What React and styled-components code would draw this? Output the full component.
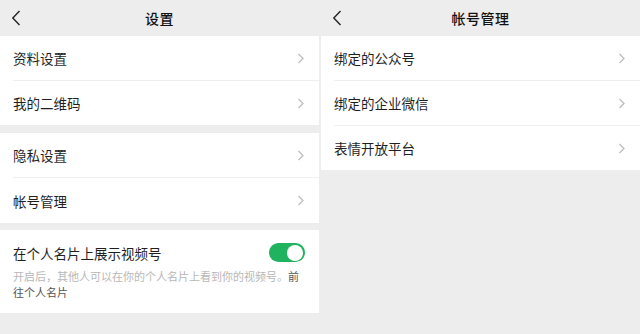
import React from "react";
import styled, { createGlobalStyle } from "styled-components";

const GlobalStyle = createGlobalStyle`
  html, body {
    margin: 0;
    padding: 0;
    background: #ededed;
  }
  body {
    font-family: "Noto Sans CJK SC", "Noto Sans", sans-serif;
    color: #1a1a1a;
  }
`;

const Screens = styled.div`
  display: grid;
  grid-template-columns: 320px 320px;
  width: 640px;
  height: 334px;
  overflow: hidden;
  background: #ededed;
`;

const Screen = styled.div`
  display: flex;
  flex-direction: column;
  padding-left: ${(p) => (p.$side === "right" ? "1px" : "0")};
  padding-right: ${(p) => (p.$side === "left" ? "1px" : "0")};
`;

const NavBar = styled.div`
  position: relative;
  height: 36px;
  display: flex;
  align-items: center;
  justify-content: center;
  background: #ededed;
`;

const BackButton = styled.div`
  position: absolute;
  left: 11px;
  top: 10px;
  width: 10px;
  height: 16px;
  display: flex;
`;

const NavTitle = styled.div`
  font-size: 14px;
  font-weight: 500;
  color: #111;
  letter-spacing: 0.5px;
`;

const Card = styled.div`
  background: #fff;
  margin-bottom: ${(p) => p.$gap || 0}px;
`;

const Row = styled.div`
  position: relative;
  height: ${(p) => p.$h || 44}px;
  display: flex;
  align-items: center;
  justify-content: space-between;
  padding: 0 14px 0 13px;
  font-size: 13.5px;
  color: #1f1f1f;

  & + & {
    border-top: 1px solid #f0f0f0;
  }
`;

const Divider = styled.div`
  height: 1px;
  margin-left: 13px;
  background: #efefef;
`;

const ToggleCard = styled.div`
  background: #fff;
  padding: 13px 13px 13px 13px;
`;

const ToggleRow = styled.div`
  height: 19px;
  display: flex;
  align-items: center;
  justify-content: space-between;
  font-size: 13.5px;
  color: #1f1f1f;
`;

const Switch = styled.div`
  width: 36px;
  height: 19px;
  border-radius: 10px;
  background: #1fb25f;
  display: flex;
  align-items: center;
  justify-content: flex-end;
  padding: 0 2px;
  box-sizing: border-box;
  margin-right: 1px;
`;

const Knob = styled.div`
  width: 16px;
  height: 16px;
  border-radius: 50%;
  background: #fff;
`;

const Desc = styled.div`
  margin-top: 6px;
  font-size: 11px;
  line-height: 16px;
  color: #b7b7b7;
`;

const DescLink = styled.span`
  color: #555;
`;

const Chevron = () => (
  <svg width="8" height="11" viewBox="0 0 8 11">
    <path d="M1.5 1 L6 5.5 L1.5 10" fill="none" stroke="#bdbdbd" strokeWidth="1.3" />
  </svg>
);

const Back = () => (
  <BackButton>
    <svg width="10" height="16" viewBox="0 0 10 16">
      <path d="M8.5 1 L1.8 8 L8.5 15" fill="none" stroke="#222" strokeWidth="1.4" />
    </svg>
  </BackButton>
);

const Item = ({ label, h }) => (
  <Row $h={h}>
    <span>{label}</span>
    <Chevron />
  </Row>
);

export default function App() {
  return (
    <Screens>
      <GlobalStyle />
      <Screen $side="left">
        <NavBar>
          <Back />
          <NavTitle>设置</NavTitle>
        </NavBar>
        <Card $gap={8}>
          <Item label="资料设置" h={44} />
          <Divider />
          <Item label="我的二维码" h={44} />
        </Card>
        <Card $gap={7}>
          <Item label="隐私设置" h={44} />
          <Divider />
          <Item label="帐号管理" h={45} />
        </Card>
        <ToggleCard>
          <ToggleRow>
            <span>在个人名片上展示视频号</span>
            <Switch>
              <Knob />
            </Switch>
          </ToggleRow>
          <Desc>
            开启后，其他人可以在你的个人名片上看到你的视频号。
            <DescLink>前往个人名片</DescLink>
          </Desc>
        </ToggleCard>
      </Screen>
      <Screen $side="right">
        <NavBar>
          <Back />
          <NavTitle>帐号管理</NavTitle>
        </NavBar>
        <Card>
          <Item label="绑定的公众号" h={44} />
          <Divider />
          <Item label="绑定的企业微信" h={44} />
          <Divider />
          <Item label="表情开放平台" h={44} />
        </Card>
      </Screen>
    </Screens>
  );
}
